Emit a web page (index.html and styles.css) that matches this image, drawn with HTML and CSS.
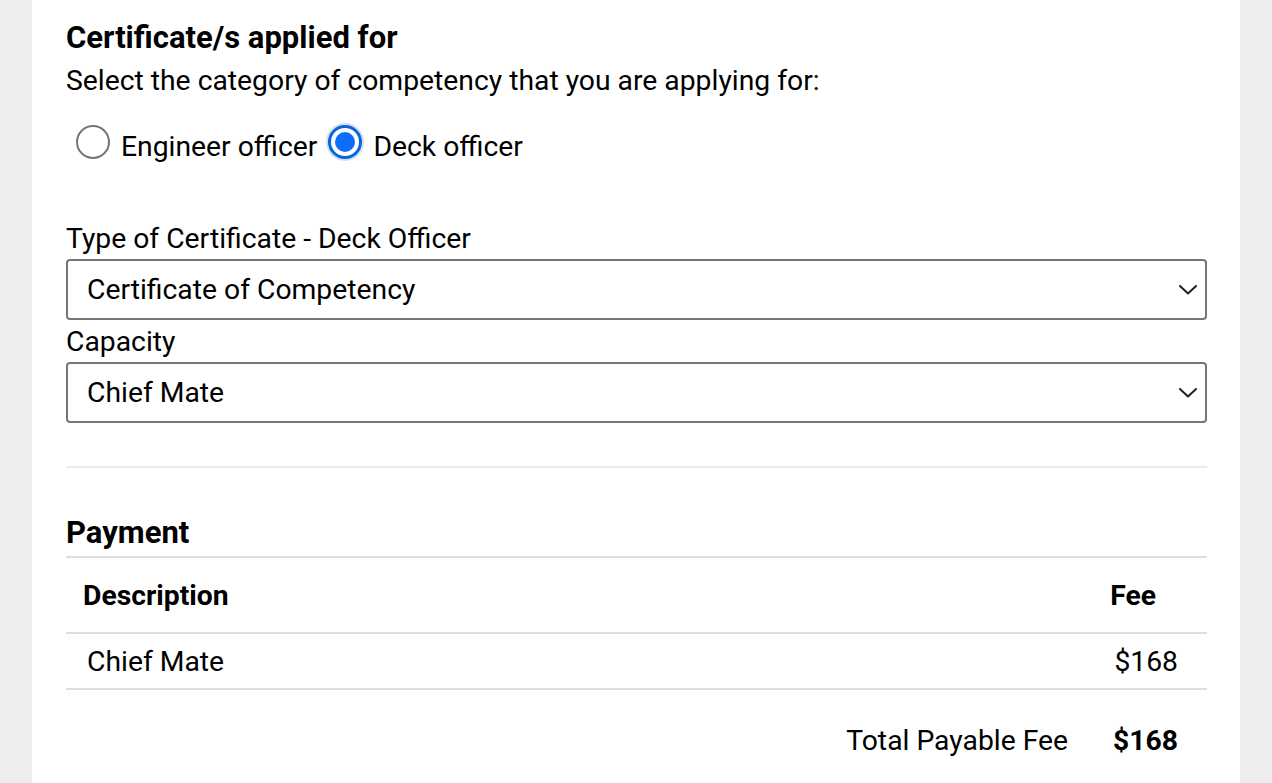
FILE: index.html
```html
<!DOCTYPE html>
<html lang="en">
<head>
<meta charset="utf-8">
<title>Certificate application</title>
<link rel="stylesheet" href="styles.css">
</head>
<body>
<main class="panel">
  <h2 class="heading">Certificate/s applied for</h2>
  <p class="sub">Select the category of competency that you are applying for:</p>
  <div class="radios">
    <label class="radio"><span class="dot"></span><span>Engineer officer</span></label>
    <label class="radio"><span class="dot checked"></span><span>Deck officer</span></label>
  </div>

  <div class="field first">
    <div class="label">Type of Certificate - Deck Officer</div>
    <div class="select">
      <span>Certificate of Competency</span>
      <svg class="chev" width="18" height="10" viewBox="0 0 18 10"><path d="M1 1l8 7.5L17 1" fill="none" stroke="#222" stroke-width="2" stroke-linecap="round" stroke-linejoin="round"/></svg>
    </div>
  </div>
  <div class="field second">
    <div class="label">Capacity</div>
    <div class="select">
      <span>Chief Mate</span>
      <svg class="chev" width="18" height="10" viewBox="0 0 18 10"><path d="M1 1l8 7.5L17 1" fill="none" stroke="#222" stroke-width="2" stroke-linecap="round" stroke-linejoin="round"/></svg>
    </div>
  </div>

  <hr class="rule">

  <h2 class="heading pay">Payment</h2>
  <div class="table">
    <div class="thead">
      <div class="c-desc">Description</div>
      <div class="c-fee">Fee</div>
    </div>
    <div class="trow">
      <div class="c-desc">Chief Mate</div>
      <div class="c-fee">$168</div>
    </div>
  </div>
  <div class="total">
    <span class="t-label">Total Payable Fee</span>
    <span class="t-val">$168</span>
  </div>
</main>
</body>
</html>
```

FILE: styles.css
```css
* { box-sizing: border-box; }
html, body { margin: 0; padding: 0; }
body {
  background: #eeeeee;
  font-family: Roboto, "Noto Sans", "Liberation Sans", sans-serif;
  font-size: 28.3px;
  color: #000;
  height: 783px;
  overflow: hidden;
}
.panel {
  background: #fff;
  margin: 0 32px;
  padding: 20px 33px 0 34px;
  height: 783px;
}
.heading {
  font-size: 31px;
  font-weight: 700;
  line-height: 36px;
  margin: 0;
}
.sub {
  margin: 5px 0 0;
  line-height: 40px;
}
.radios {
  display: flex;
  align-items: center;
  margin-top: 26px;
  padding-left: 10px;
  height: 40px;
}
.radio {
  display: flex;
  align-items: center;
  gap: 11px;
  margin-right: 11px;
  line-height: 40px;
}
.dot {
  width: 34px;
  height: 34px;
  border-radius: 50%;
  border: 2px solid #767676;
  background: #fff;
  display: inline-block;
  position: relative;
  top: -5px;
}
.dot.checked {
  border: 3px solid #0a66d8;
  box-shadow: 0 0 0 2px #cfe0f7;
}
.dot.checked::after {
  content: "";
  position: absolute;
  left: 4px; top: 4px; right: 4px; bottom: 4px;
  border-radius: 50%;
  background: #0d6efd;
}
.field.first { margin-top: 52px; }
.field.second { margin-top: 2px; }
.label {
  line-height: 40px;
  margin-bottom: 0;
}
.select {
  height: 61px;
  border: 2px solid #767676;
  border-radius: 4px;
  display: flex;
  align-items: center;
  justify-content: space-between;
  padding: 0 8px 0 19px;
  line-height: 40px;
}
.chev { display: block; }
.rule {
  border: 0;
  border-top: 2px solid #ebebeb;
  margin: 43px 0 0;
}
.pay { margin-top: 47px; }
.table {
  margin-top: 5px;
  border-top: 2px solid #dedede;
}
.thead, .trow {
  display: flex;
  justify-content: space-between;
  border-bottom: 2px solid #dedede;
  align-items: center;
}
.thead {
  height: 76px;
  font-weight: 700;
  padding: 0 51px 0 17px;
}
.trow {
  height: 56px;
  padding: 0 29px 0 21px;
}
.total {
  display: flex;
  justify-content: flex-end;
  align-items: center;
  gap: 45px;
  margin-top: 31px;
  padding-right: 29px;
  line-height: 40px;
}
.t-val { font-weight: 700; }
```
